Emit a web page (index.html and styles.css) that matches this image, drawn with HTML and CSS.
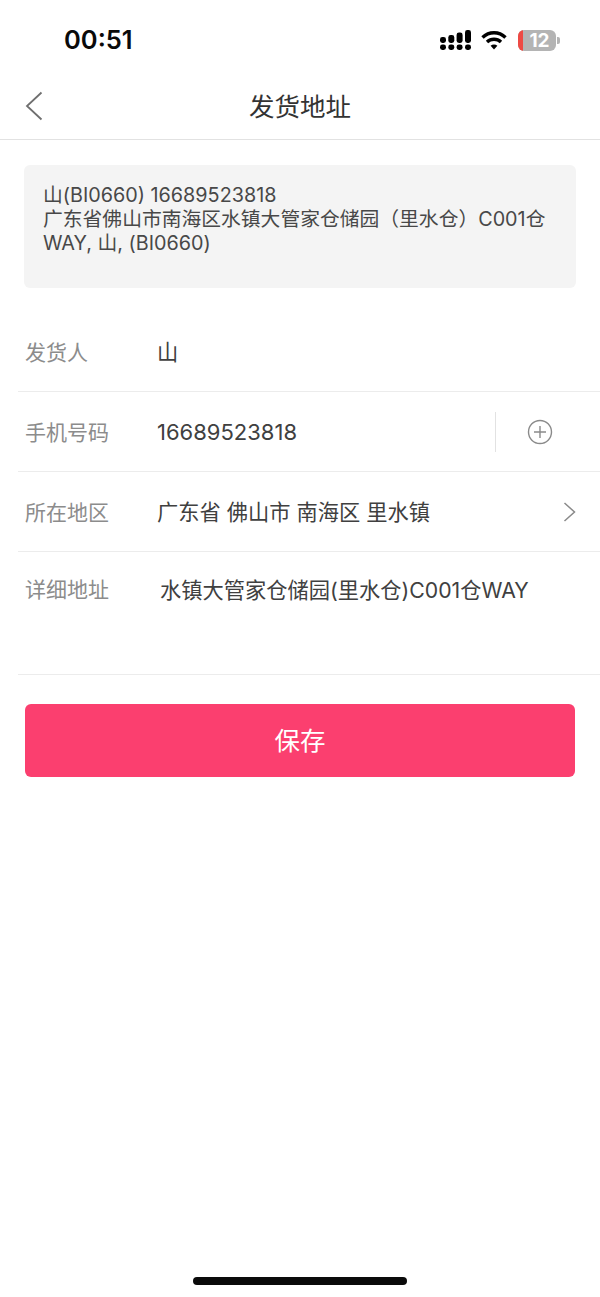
FILE: index.html
```html
<!DOCTYPE html>
<html lang="zh-CN">
<head>
  <meta charset="UTF-8">
  <meta name="viewport" content="width=device-width, initial-scale=1.0">
  <title>发货地址</title>
  <link rel="stylesheet" href="styles.css">
</head>
<body>
  <div class="status-bar">
    <div class="time">00:51</div>
    <div class="status-icons">
      <svg class="signal" width="31" height="20" viewBox="0 0 31 20" fill="#000">
        <rect x="0" y="7" width="6" height="6" rx="2.4"/>
        <rect x="0" y="14.5" width="6" height="5.5" rx="2.4"/>
        <rect x="8.3" y="5" width="6" height="8" rx="2.4"/>
        <rect x="8.3" y="14.5" width="6" height="5.5" rx="2.4"/>
        <rect x="16.6" y="2.5" width="6" height="10.5" rx="2.4"/>
        <rect x="16.6" y="14.5" width="6" height="5.5" rx="2.4"/>
        <rect x="25" y="0" width="6" height="13" rx="2.4"/>
        <rect x="25" y="14.5" width="6" height="5.5" rx="2.4"/>
      </svg>
      <svg class="wifi" width="26" height="20" viewBox="0 0 26 20" fill="none" stroke="#000" stroke-width="3.4">
        <path d="M1.5 7.5C8 1.2 18 1.2 24.5 7.5"/>
        <path d="M6 12C10 8.3 16 8.3 20 12"/>
        <path d="M13 19.5L9.6 15.8C11.5 14.2 14.5 14.2 16.4 15.8Z" fill="#000" stroke="none"/>
      </svg>
      <div class="battery">
        <div class="battery-low"></div>
        <div class="battery-num">12</div>
      </div>
      <div class="battery-tip"></div>
    </div>
  </div>

  <div class="nav-bar">
    <svg class="back" width="18" height="30" viewBox="0 0 18 30" fill="none" stroke="#6f6f6f" stroke-width="1.8">
      <path d="M16.5 1.5L2 15L16.5 28.5"/>
    </svg>
    <div class="nav-title">发货地址</div>
  </div>

  <div class="paste-box">山(BI0660) 16689523818<br>广东省佛山市南海区水镇大管家仓储园（里水仓）C001仓<br>WAY, 山, (BI0660)</div>

  <div class="form">
    <div class="row">
      <div class="row-label">发货人</div>
      <div class="row-value">山</div>
    </div>
    <div class="row">
      <div class="row-label">手机号码</div>
      <div class="row-value row-phone">16689523818</div>
      <div class="row-divider"></div>
      <svg class="plus" width="26" height="26" viewBox="0 0 26 26" fill="none" stroke="#8a8a8a" stroke-width="1.4">
        <circle cx="13" cy="13" r="11.5"/>
        <path d="M13 7V19M7 13H19"/>
      </svg>
    </div>
    <div class="row">
      <div class="row-label">所在地区</div>
      <div class="row-value">广东省 佛山市 南海区 里水镇</div>
      <svg class="chevron" width="13" height="20" viewBox="0 0 13 20" fill="none" stroke="#8a8a8a" stroke-width="1.5">
        <path d="M1.5 1L11.5 10L1.5 19"/>
      </svg>
    </div>
    <div class="row row-tall">
      <div class="row-label">详细地址</div>
      <div class="row-value row-detail">水镇大管家仓储园(里水仓)C001仓WAY</div>
    </div>
  </div>

  <button class="save-btn">保存</button>

  <div class="home-bar"></div>
</body>
</html>
```

FILE: styles.css
```css
* {
  box-sizing: border-box;
}

html, body {
  margin: 0;
  padding: 0;
}

body {
  width: 600px;
  height: 1297px;
  background-color: #fff;
  font-family: Inter, "Noto Sans CJK SC", sans-serif;
  color: #333;
  display: flex;
  flex-direction: column;
}

.status-bar {
  height: 72px;
  padding: 6px 40px 0 64px;
  display: flex;
  align-items: center;
  justify-content: space-between;
}

.time {
  font-size: 25.5px;
  font-weight: 600;
  color: #0a0a0a;
}

.status-icons {
  display: flex;
  align-items: center;
  padding-top: 2px;
}

.signal {
  margin-right: 10px;
}

.wifi {
  margin-right: 11px;
}

.battery {
  width: 38px;
  height: 21px;
  background: #b4b4b4;
  border-radius: 6px;
  overflow: hidden;
  display: flex;
}

.battery-low {
  width: 5px;
  background: #ee4a44;
}

.battery-num {
  flex: 1;
  text-align: center;
  color: #fff;
  font-size: 19px;
  font-weight: 700;
  line-height: 21px;
}

.battery-tip {
  width: 3px;
  height: 7px;
  margin-left: 1px;
  background: #b4b4b4;
  border-radius: 0 2px 2px 0;
}

.nav-bar {
  height: 68px;
  border-bottom: 1px solid #e2e2e2;
  padding-left: 25px;
  display: flex;
  align-items: center;
  position: relative;
}

.nav-title {
  position: absolute;
  left: 0;
  right: 0;
  padding-bottom: 2px;
  text-align: center;
  font-size: 25.5px;
  color: #333;
}

.paste-box {
  margin: 25px 24px 0;
  height: 123px;
  padding: 18px 19px 0;
  background: #f4f4f4;
  border-radius: 6px;
  font-size: 19.8px;
  line-height: 24px;
  color: #484848;
}

.form {
  margin: 24px 0 0 18px;
}

.row {
  height: 80px;
  border-bottom: 1px solid #ececec;
  padding-left: 7px;
  display: flex;
  align-items: center;
}

.row-tall {
  height: 123px;
  align-items: flex-start;
  padding-top: 21px;
}

.row-label {
  width: 132px;
  padding-bottom: 2px;
  font-size: 21px;
  color: #8c8c8c;
}

.row-value {
  flex: 1;
  padding-bottom: 2px;
  font-size: 21.25px;
  color: #404040;
}

.row-phone {
  padding: 1px 0 0;
  font-size: 22px;
}

.row-detail {
  padding-left: 3px;
}

.row-divider {
  width: 1px;
  height: 40px;
  background: #e2e2e2;
  margin-right: 31px;
}

.plus {
  margin-right: 47px;
}

.chevron {
  margin-right: 24px;
}

.save-btn {
  display: block;
  margin: 29px 25px 0;
  height: 73px;
  border: none;
  border-radius: 6px;
  background-color: #fb3f6f;
  color: #fff;
  font-family: inherit;
  font-size: 25.5px;
  padding-bottom: 5px;
}

.home-bar {
  width: 214px;
  height: 8px;
  margin: auto auto 12px;
  background: #0a0a0a;
  border-radius: 4px;
}
```
